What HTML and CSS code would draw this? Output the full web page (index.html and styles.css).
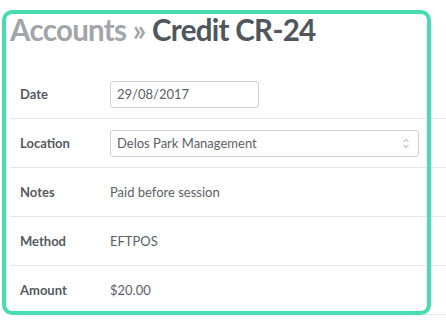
FILE: index.html
```html
<!DOCTYPE html>
<html>
<head>
<meta charset="utf-8">
<link rel="stylesheet" href="styles.css">
</head>
<body>
<div class="page">
  <h1 class="title"><span class="crumb">Accounts »</span> Credit CR-24</h1>
  <div class="table">
    <div class="row">
      <div class="label">Date</div>
      <div class="value"><div class="input date">29/08/2017</div></div>
    </div>
    <div class="row">
      <div class="label">Location</div>
      <div class="value">
        <div class="input select">
          <span>Delos Park Management</span>
          <svg class="chev" width="8" height="11" viewBox="0 0 8 11"><path d="M1.5 4 L4 1.5 L6.5 4 M1.5 7 L4 9.5 L6.5 7" fill="none" stroke="#9a9ea2" stroke-width="1"/></svg>
        </div>
      </div>
    </div>
    <div class="row">
      <div class="label">Notes</div>
      <div class="value">Paid before session</div>
    </div>
    <div class="row">
      <div class="label">Method</div>
      <div class="value">EFTPOS</div>
    </div>
    <div class="row">
      <div class="label">Amount</div>
      <div class="value">$20.00</div>
    </div>
  </div>
  <div class="highlight"></div>
</div>
</body>
</html>
```
FILE: styles.css
```css
html, body {
  margin: 0;
  padding: 0;
  background: #ffffff;
}
body {
  font-family: Lato, "Open Sans", sans-serif;
  width: 446px;
  height: 328px;
  overflow: hidden;
}
.page {
  position: relative;
  padding: 12px 0 0 10px;
}
.title {
  margin: 0;
  font-size: 29.5px;
  line-height: 36px;
  font-weight: 700;
  color: #4f565c;
  letter-spacing: -0.7px;
}
.crumb {
  color: #a2a5a8;
}
.table {
  margin-top: 22px;
  width: 436px;
}
.row {
  display: flex;
  align-items: center;
  height: 48px;
  border-bottom: 1px solid #e7e8e9;
  font-size: 13px;
}
.label {
  width: 90px;
  padding-left: 10px;
  font-weight: 700;
  color: #555b61;
}
.value {
  color: #5b6166;
  display: flex;
  align-items: center;
}
.input {
  box-sizing: border-box;
  height: 27px;
  border: 1px solid #cfd1d3;
  border-radius: 3px;
  padding: 0 6px;
  display: flex;
  align-items: center;
  color: #5b6166;
}
.date {
  width: 149px;
}
.select {
  width: 309px;
  justify-content: space-between;
  padding-right: 8px;
}
.chev {
  display: block;
}
.highlight {
  position: absolute;
  left: 2px;
  top: 10px;
  width: 429px;
  height: 305px;
  box-sizing: border-box;
  border: 4px solid #48ddb0;
  border-radius: 10px;
  pointer-events: none;
}
```
